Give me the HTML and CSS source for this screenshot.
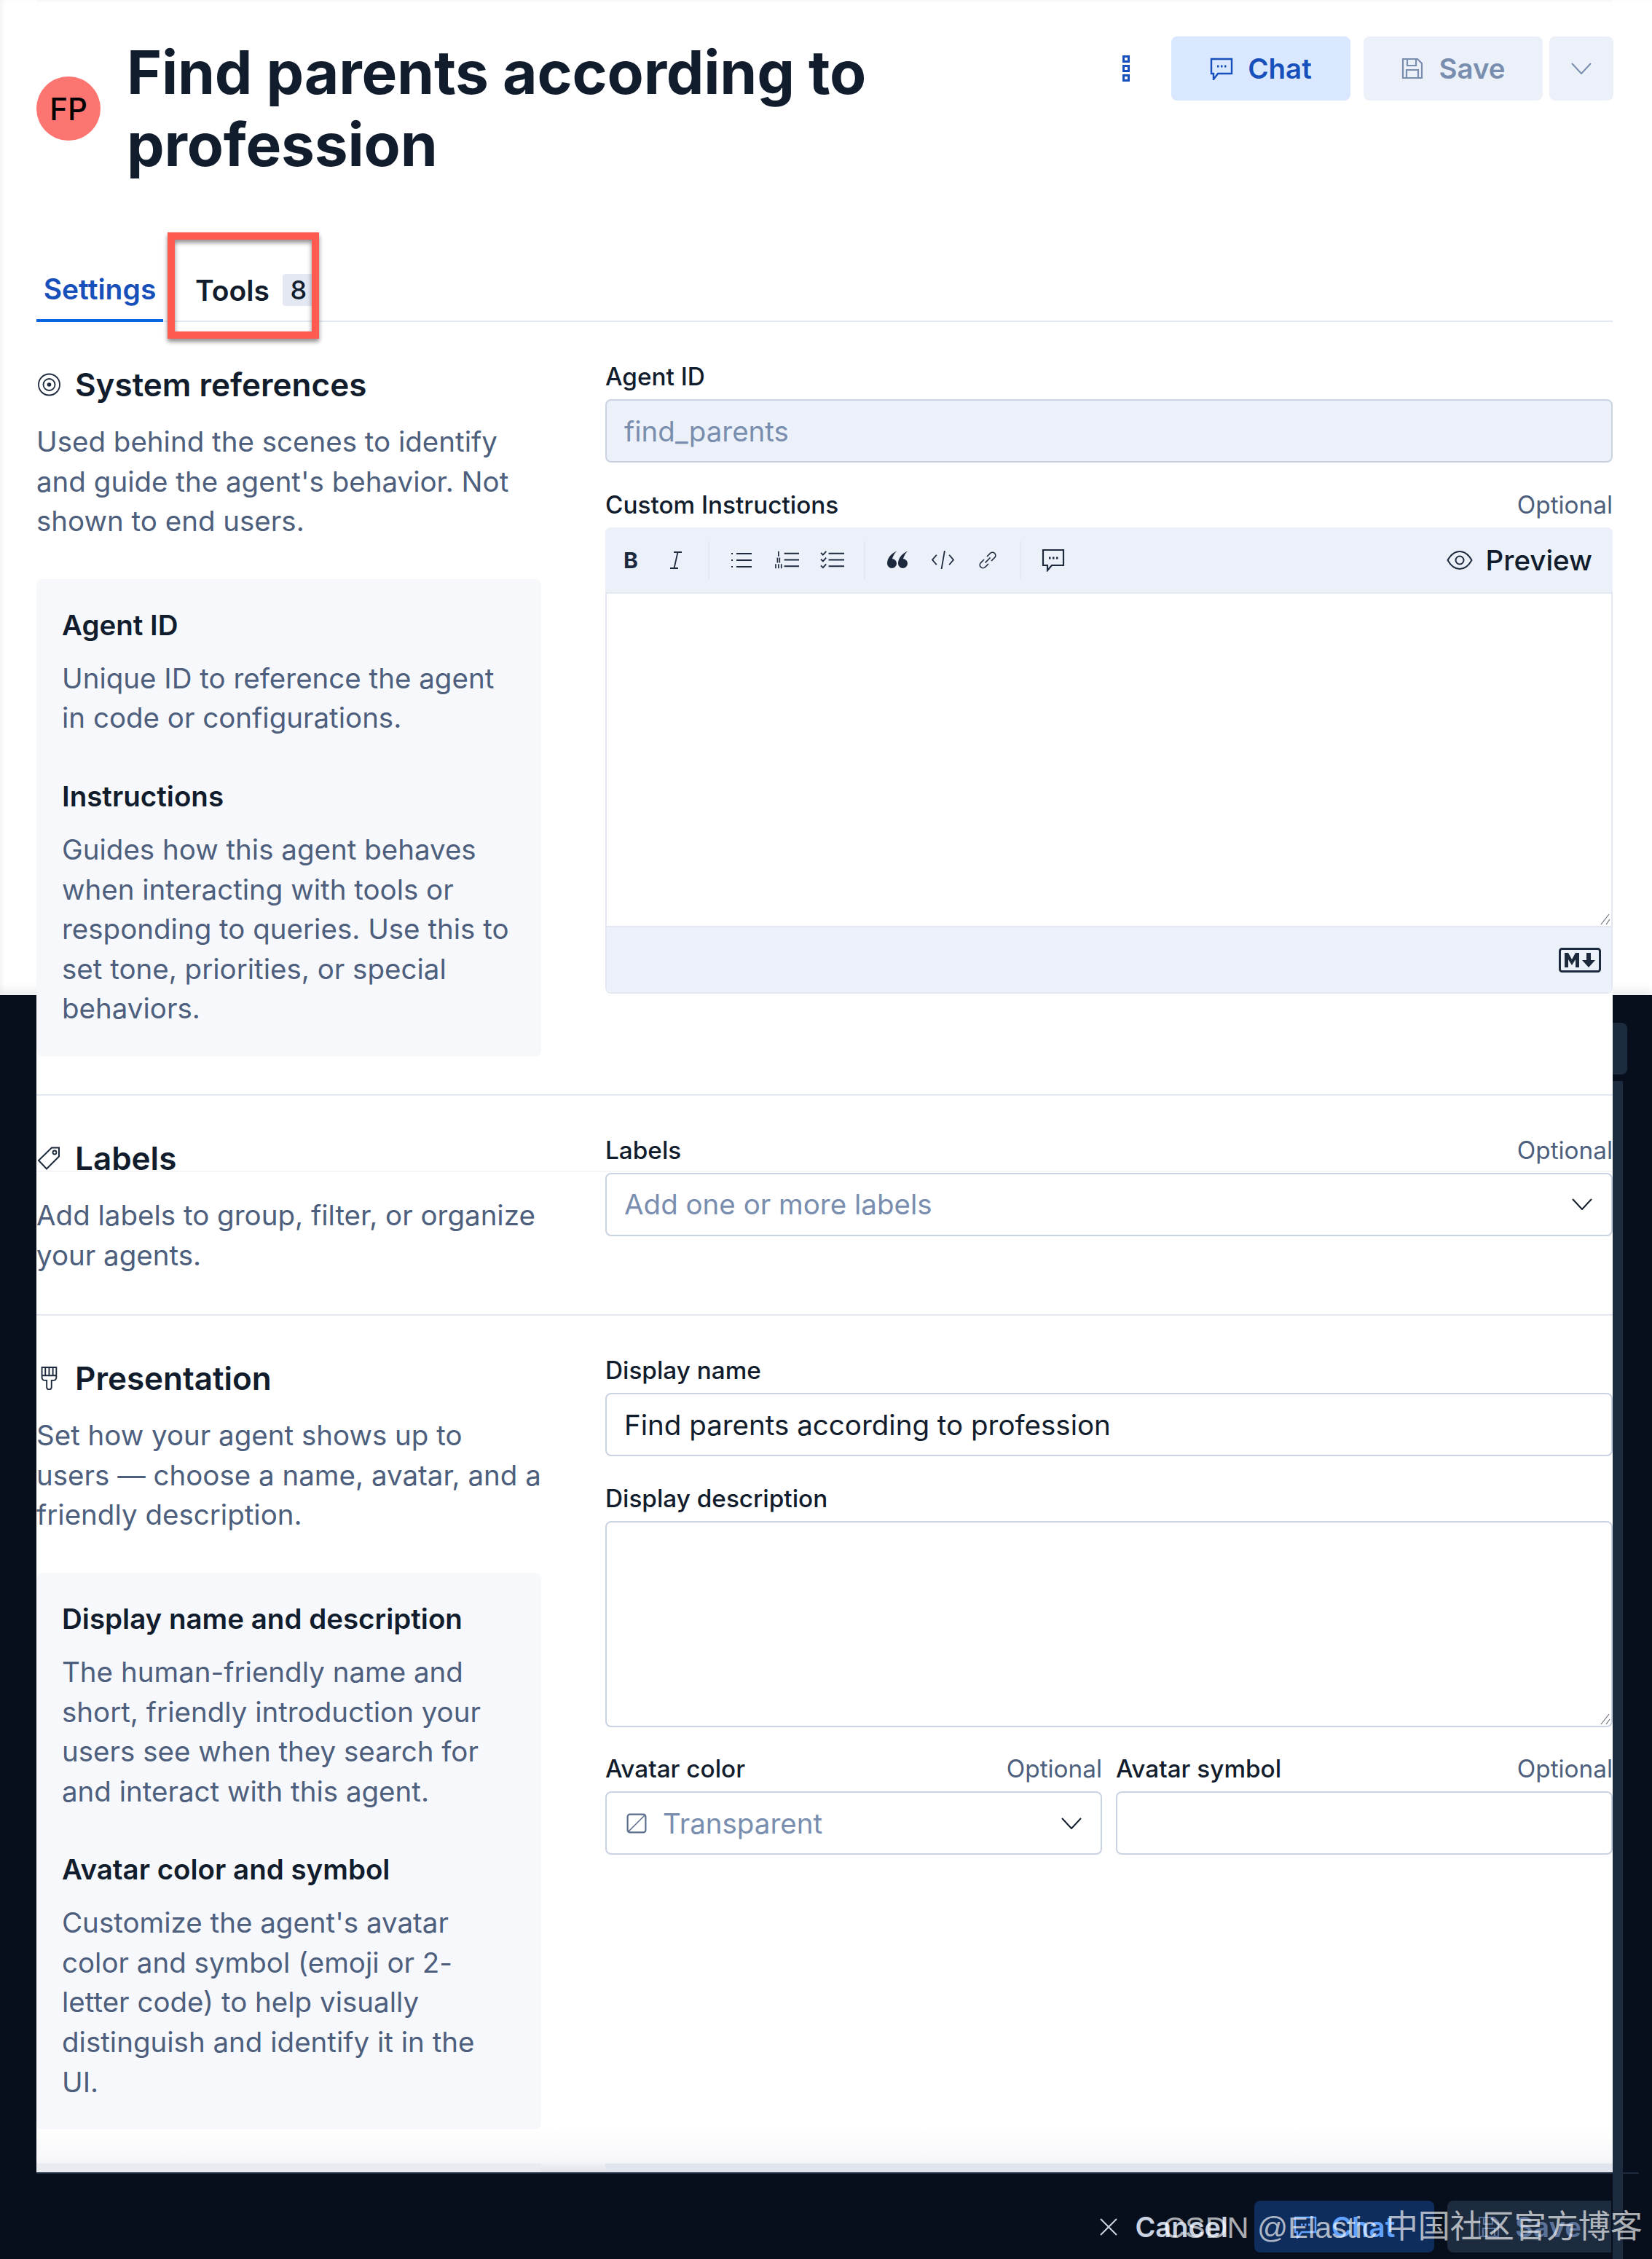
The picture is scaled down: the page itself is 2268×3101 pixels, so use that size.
FILE: index.html
```html
<!DOCTYPE html>
<html lang="en">
<head>
  <meta charset="UTF-8" />
  <title>Find parents according to profession</title>
  <link rel="stylesheet" href="styles.css">
</head>
<body>

<div class="page">
  <div class="backdrop"></div>
  <div class="side-block"></div>
  <div class="side-strip"></div>

  <div class="sheet">
    <header class="top">
      <div class="avatar">FP</div>
      <h1>Find parents according to<br>profession</h1>
      <div class="top-actions">
        <svg class="dots" viewBox="0 0 10 36"><path d="M1.5 1.5h7v7h-7zM1.5 14.5h7v7h-7zM1.5 27.5h7v7h-7z" fill="none" stroke="#1750ba" stroke-width="3"/></svg>
        <button class="btn btn-chat">
          <svg class="btn-icon" viewBox="0 0 32 32"><path d="M2 3h28v20H11l-6 8v-8H2z" fill="none" stroke="currentColor" stroke-width="2.4"/><path d="M10 13h2.5M15 13h2.5M20 13h2.5" stroke="currentColor" stroke-width="3"/></svg>
          Chat
        </button>
        <button class="btn btn-save">
          <svg class="btn-icon" viewBox="0 0 32 32"><path d="M3 3h20l6 6v20H3zM9 3v9h12V3M8 29V18h16v11" fill="none" stroke="currentColor" stroke-width="2.2"/></svg>
          Save
        </button>
        <button class="btn btn-more">
          <svg class="chevron" viewBox="0 0 28 16"><path d="M1 1l13 14L27 1" fill="none" stroke="currentColor" stroke-width="2"/></svg>
        </button>
      </div>
    </header>

    <nav class="tabs">
      <div class="tab tab-active">Settings</div>
      <div class="tab tab-tools">Tools <span class="count">8</span></div>
      <div class="callout"></div>
    </nav>

    <section class="row row-first">
      <div class="info">
        <h2>
          <svg class="head-icon" viewBox="0 0 33 32"><circle cx="17.500" cy="16" r="14.500" fill="none" stroke="#1d2a3e" stroke-width="1.800"/><circle cx="17.500" cy="16" r="8" fill="none" stroke="#1d2a3e" stroke-width="1.800"/><circle cx="17.500" cy="16" r="2.800" fill="#1d2a3e"/></svg>
          System references
        </h2>
        <p class="desc">Used behind the scenes to identify and guide the agent's behavior. Not shown to end users.</p>
        <div class="help help-first">
          <h3>Agent ID</h3>
          <p>Unique ID to reference the agent in code or configurations.</p>
          <h3>Instructions</h3>
          <p>Guides how this agent behaves when interacting with tools or responding to queries. Use this to set tone, priorities, or special behaviors.</p>
        </div>
      </div>
      <div class="fields">
        <div class="field-label"><span>Agent ID</span></div>
        <div class="input input-disabled">find_parents</div>
        <div class="field-label"><span>Custom Instructions</span><span class="optional">Optional</span></div>
        <div class="editor">
          <div class="toolbar">
            <div class="tool-group">
              <span class="tool tool-b">B</span>
              <span class="tool"><svg class="tool-i" viewBox="0 0 16 24"><path d="M5 1h11M0 23h11M10.500 1L5.500 23" fill="none" stroke="#1d2a3e" stroke-width="1.800"/></svg></span>
            </div>
            <div class="tool-group">
              <span class="tool"><svg class="tool-list" viewBox="0 0 28 24"><path d="M7 3h21M7 12h21M7 21h21" stroke="#1d2a3e" stroke-width="2"/><path d="M0 2h2v2H0zM0 11h2v2H0zM0 20h2v2H0z" fill="#1d2a3e"/></svg></span>
              <span class="tool"><svg class="tool-ol" viewBox="0 0 34 24"><path d="M13 3h21M13 12h21M13 21h21" stroke="#1d2a3e" stroke-width="2"/><path d="M5 0v7M3.500 9v7M6.500 9v7M1 18v6M5 18v6M9 18v6" stroke="#1d2a3e" stroke-width="1.700"/></svg></span>
              <span class="tool"><svg class="tool-ol" viewBox="0 0 34 24"><path d="M12 3h22M12 12h22M12 21h22" stroke="#1d2a3e" stroke-width="2"/><path d="M1 2l3 3 4.500-5M1 11l3 3 4.500-5M1 20l3 3 4.500-5" fill="none" stroke="#1d2a3e" stroke-width="1.800"/></svg></span>
            </div>
            <div class="tool-group">
              <span class="tool"><svg class="tool-quote" viewBox="0 0 29 24"><path d="M13 0C6 3 0 9 0 17a6.500 6.500 0 1 0 7-6.500C8 7 10 3 13 0zM28 0C21 3 15 9 15 17a6.500 6.500 0 1 0 7-6.500C23 7 25 3 28 0z" fill="#1d2a3e"/></svg></span>
              <span class="tool"><svg class="tool-ol" viewBox="0 0 32 26"><path d="M7 6l-6 7 6 7M25 6l6 7-6 7M18.500 0L14 26" fill="none" stroke="#1d2a3e" stroke-width="1.900"/></svg></span>
              <span class="tool"><svg class="tool-link" viewBox="0 0 24 24"><path d="M11 7l4.500-4.500a4 4 0 0 1 6 6L17 13M13 17l-4.500 4.500a4 4 0 0 1-6-6L7 11M8.500 15.500l7-7" fill="none" stroke="#1d2a3e" stroke-width="1.700"/></svg></span>
            </div>
            <div class="tool-group tool-last">
              <span class="tool"><svg class="tool-comment" viewBox="0 0 32 32"><path d="M2 2h28v21H14l-6 7v-7H2z" fill="none" stroke="#1d2a3e" stroke-width="2.200"/><path d="M10 13h2.500M15 13h2.500M20 13h2.500" stroke="#1d2a3e" stroke-width="3"/></svg></span>
            </div>
            <div class="preview">
              <svg class="eye" viewBox="0 0 36 28"><path d="M1.500 14C6 6 11 2 18 2s12 4 16.500 12C30 22 25 26 18 26S6 22 1.500 14z" fill="none" stroke="#1d2a3e" stroke-width="2"/><circle cx="18" cy="14" r="5.500" fill="none" stroke="#1d2a3e" stroke-width="2"/></svg>
              Preview
            </div>
          </div>
          <div class="editor-body">
            <svg class="grip" viewBox="0 0 14 16"><path d="M1 15L12 1M8 15l5-7" stroke="#69707d" stroke-width="1.200"/></svg>
          </div>
          <div class="editor-foot">
            <svg class="md" viewBox="0 0 58 34"><rect x="1.500" y="1.500" width="55" height="31" rx="3" fill="none" stroke="#1d2a3e" stroke-width="3"/><path d="M8 27V7h5l5 9 5-9h5v20h-5V16l-5 8-5-8v11z" fill="#1d2a3e"/><path d="M38 7h6v10h6l-9 10-9-10h6z" fill="#1d2a3e"/></svg>
          </div>
        </div>
      </div>
    </section>

    <hr class="rule rule-labels">

    <section class="row">
      <div class="info">
        <h2>
          <svg class="head-icon" viewBox="0 0 33 32"><path d="M21 1.500h10v12L14 30.500 3 19z" fill="none" stroke="#1d2a3e" stroke-width="2"/><circle cx="25" cy="8" r="2.500" fill="none" stroke="#1d2a3e" stroke-width="1.800"/></svg>
          Labels
        </h2>
        <p class="desc">Add labels to group, filter, or organize your agents.</p>
      </div>
      <div class="fields">
        <div class="field-label"><span>Labels</span><span class="optional">Optional</span></div>
        <div class="input input-select placeholder">
          Add one or more labels
          <svg class="chevron chevron-dark" viewBox="0 0 28 16"><path d="M1 1l13 14L27 1" fill="none" stroke="currentColor" stroke-width="2"/></svg>
        </div>
      </div>
    </section>

    <hr class="rule rule-presentation">

    <section class="row">
      <div class="info">
        <h2>
          <svg class="head-icon" viewBox="0 0 33 34"><path d="M7 1h21v15a4 4 0 0 1-4 4h-3v10a3 3 0 0 1-7 0V20h-3a4 4 0 0 1-4-4zM7 13h21M12 1v12M17.500 1v12M23 1v12" fill="none" stroke="#1d2a3e" stroke-width="2"/></svg>
          Presentation
        </h2>
        <p class="desc">Set how your agent shows up to users — choose a name, avatar, and a friendly description.</p>
        <div class="help">
          <h3>Display name and description</h3>
          <p>The human-friendly name and short, friendly introduction your users see when they search for and interact with this agent.</p>
          <h3>Avatar color and symbol</h3>
          <p>Customize the agent's avatar color and symbol (emoji or 2-letter code) to help visually distinguish and identify it in the UI.</p>
        </div>
      </div>
      <div class="fields">
        <div class="field-label"><span>Display name</span></div>
        <div class="input">Find parents according to profession</div>
        <div class="field-label"><span>Display description</span></div>
        <div class="textarea">
          <svg class="grip" viewBox="0 0 14 16"><path d="M1 15L12 1M8 15l5-7" stroke="#69707d" stroke-width="1.200"/></svg>
        </div>
        <div class="avatar-fields">
          <div>
            <div class="field-label"><span>Avatar color</span><span class="optional">Optional</span></div>
            <div class="input input-select placeholder">
              <span class="swatch-wrap">
                <svg class="swatch" viewBox="0 0 26 26"><rect x="1.500" y="1.500" width="23" height="23" rx="3" fill="none" stroke="#5a6d8c" stroke-width="2"/><path d="M3 23L23 3" stroke="#5a6d8c" stroke-width="1.500"/></svg>
                Transparent
              </span>
              <svg class="chevron chevron-dark" viewBox="0 0 28 16"><path d="M1 1l13 14L27 1" fill="none" stroke="currentColor" stroke-width="2"/></svg>
            </div>
          </div>
          <div>
            <div class="field-label"><span>Avatar symbol</span><span class="optional">Optional</span></div>
            <div class="input"></div>
          </div>
        </div>
      </div>
    </section>

    <div class="peek">
      <div class="peek-left"></div>
      <div class="peek-right"></div>
    </div>
  </div>

  <footer class="bottom">
    <div class="cancel">
      <svg class="cancel-x" viewBox="0 0 24 24"><path d="M1 1l22 22M23 1L1 23" stroke="currentColor" stroke-width="2"/></svg>
      Cancel
    </div>
    <button class="btn btn-dark-chat">
      <svg class="btn-icon" viewBox="0 0 32 32"><path d="M2 3h28v20H11l-6 8v-8H2z" fill="none" stroke="currentColor" stroke-width="2.400"/><path d="M10 13h2.500M15 13h2.500M20 13h2.500" stroke="currentColor" stroke-width="3"/></svg>
      Chat
    </button>
    <button class="btn btn-dark-save">
      <svg class="btn-icon" viewBox="0 0 32 32"><path d="M3 3h20l6 6v20H3zM9 3v9h12V3M8 29V18h16v11" fill="none" stroke="currentColor" stroke-width="2.200"/></svg>
      Save
    </button>
  </footer>

  <div class="seam"></div>
  <div class="watermark"><span class="watermark-latin">CSDN @Elastic</span> 中国社区官方博客</div>
</div>

</body>
</html>
```

FILE: styles.css
```css
* {
  margin: 0;
  padding: 0;
  box-sizing: border-box;
}
body {
  font-family: Inter, 'Liberation Sans', sans-serif;
  background: #fff;
  color: #111c2c;
}
button {
  font-family: inherit;
  border: none;
}

.page {
  position: relative;
  width: 2268px;
  height: 3101px;
  overflow: hidden;
  box-shadow: inset 5px 0 6px -2px rgba(0,0,0,0.05);
}
.backdrop {
  position: absolute;
  top: 1366px;
  left: 0;
  right: 0;
  bottom: 0;
  background: #070e1c;
  box-shadow: 0 -8px 10px rgba(30,40,60,0.08);
}
.side-block {
  position: absolute;
  top: 1404px;
  left: 2214px;
  width: 20px;
  height: 71px;
  background: #1d2b3e;
  border-radius: 0 8px 8px 0;
}
.side-strip {
  position: absolute;
  top: 1484px;
  left: 2214px;
  width: 14px;
  bottom: 0;
  background: #1d2b3e;
  z-index: 2;
}
.seam {
  position: absolute;
  top: 1607px;
  left: 50px;
  width: 2164px;
  height: 2px;
  background: #f5f5f7;
}

.sheet {
  position: relative;
  margin: 0 54px 0 50px;
  height: 2982px;
  background: #fff;
  box-shadow: inset 0 4px 3px -2px rgba(0,0,0,0.04);
}

/* header */
.top {
  display: flex;
  align-items: center;
  padding-top: 50px;
  position: relative;
}
.avatar {
  width: 88px;
  height: 88px;
  border-radius: 50%;
  background: #fc7570;
  color: #000;
  font-size: 42px;
  font-weight: 500;
  display: flex;
  align-items: center;
  justify-content: center;
  flex-shrink: 0;
}
h1 {
  margin-left: 36px;
  font-size: 82px;
  line-height: 99px;
  font-weight: 700;
  color: #111c2c;
  letter-spacing: -0.2px;
}
.top-actions {
  margin-left: auto;
  align-self: flex-start;
  display: flex;
  align-items: center;
}
.dots {
  width: 10px;
  height: 36px;
  margin-right: 57px;
}
.btn {
  height: 88px;
  border-radius: 8px;
  font-size: 38.5px;
  font-weight: 600;
  display: flex;
  align-items: center;
  justify-content: center;
  gap: 20px;
}
.btn-icon {
  width: 32px;
  height: 32px;
}
.btn-chat {
  width: 246px;
  background: #d9e8ff;
  color: #1750ba;
}
.btn-save {
  width: 246px;
  margin-left: 18px;
  background: #ecf1f9;
  color: #798eae;
}
.btn-more {
  width: 88px;
  margin-left: 9px;
  margin-right: -1px;
  background: #ecf1f9;
  color: #798eae;
}
.chevron {
  width: 28px;
  height: 16px;
}
.chevron-dark {
  color: #111c2c;
}

/* tabs */
.tabs {
  position: relative;
  display: flex;
  height: 88px;
  margin-top: 106px;
  border-bottom: 2px solid #e3e8f2;
}
.tab {
  display: flex;
  align-items: center;
  font-size: 39px;
  font-weight: 600;
  height: 88px;
}
.tab-active {
  width: 174px;
  justify-content: center;
  color: #1750ba;
  border-bottom: 4px solid #0b64dd;
}
.tab-tools {
  margin-left: 44px;
  gap: 18px;
}
.count {
  width: 44px;
  height: 44px;
  background: #e3e8f2;
  border-radius: 4px;
  font-size: 36px;
  font-weight: 500;
  display: flex;
  align-items: center;
  justify-content: center;
}
.callout {
  position: absolute;
  left: 180px;
  top: -35px;
  width: 208px;
  height: 146px;
  border: 10px solid #fe5a4f;
  box-shadow: 0 4px 6px rgba(0,0,0,0.45), inset 0 4px 6px rgba(0,0,0,0.45);
}

/* sections */
.row {
  display: grid;
  grid-template-columns: 693px 1383px;
  column-gap: 88px;
  padding-top: 53px;
}
.info h2 {
  display: flex;
  align-items: center;
  gap: 20px;
  margin-top: 6px;
  font-size: 44px;
  line-height: 54px;
  font-weight: 600;
}
.head-icon {
  width: 33px;
  height: 32px;
}
.desc {
  margin-top: 24px;
  font-size: 38.5px;
  line-height: 54.6px;
  color: #4d5f7d;
}
.help {
  margin-top: 52px;
  padding: 36px 35px 38px;
  background: #f7f8fc;
  border-radius: 8px;
  font-size: 38.5px;
  line-height: 54.6px;
}
.help h3 {
  font-size: 38.5px;
  line-height: 54px;
  font-weight: 600;
  margin-bottom: 19px;
}
.help p {
  color: #4d5f7d;
  margin-bottom: 53px;
}
.help p:last-child {
  margin-bottom: 0;
}
.rule {
  border: none;
  height: 2px;
  background: #e3e8f2;
}
.rule-labels {
  margin-top: 52px;
}
.rule-presentation {
  margin-top: 54px;
}

/* form fields */
.field-label {
  display: flex;
  justify-content: space-between;
  font-size: 33.3px;
  line-height: 44px;
  font-weight: 500;
  margin-bottom: 9px;
}
.optional {
  font-weight: 400;
  color: #4d5f7d;
}
.input {
  height: 87px;
  padding: 0 24px;
  border: 2px solid #cad3e2;
  border-radius: 8px;
  display: flex;
  align-items: center;
  font-size: 38.5px;
  margin-bottom: 36px;
  background: #fff;
}
.input-disabled {
  background: #ecf1f9;
  color: #798eae;
}
.placeholder {
  color: #798eae;
}
.input-select {
  justify-content: space-between;
  padding-right: 26px;
}
.swatch-wrap {
  display: flex;
  align-items: center;
  gap: 22px;
}
.swatch {
  width: 28px;
  height: 28px;
  margin-left: 3px;
}
.textarea {
  position: relative;
  height: 283px;
  border: 2px solid #cad3e2;
  border-radius: 8px;
  margin-bottom: 35px;
}
.avatar-fields {
  display: grid;
  grid-template-columns: 682px 682px;
  column-gap: 19px;
}
.grip {
  position: absolute;
  right: 1px;
  bottom: 1px;
  width: 14px;
  height: 16px;
}

/* markdown editor */
.editor {
  border-radius: 8px;
  border: 2px solid #e3e8f2;
  border-top: none;
}
.toolbar {
  height: 91px;
  background: #ecf1f9;
  border-radius: 8px 8px 0 0;
  border-bottom: 2px solid #e3e8f2;
  display: flex;
  align-items: center;
  margin-left: -2px;
  margin-right: -2px;
}
.tool-group {
  display: flex;
  height: 52px;
  padding: 0 13px 0 2px;
  margin-right: 11px;
  border-right: 2px solid #e3e8f2;
}
.tool-group:first-child {
  padding-left: 4px;
}
.tool-last {
  border-right: none;
}
.tool {
  width: 62px;
  height: 52px;
  display: flex;
  align-items: center;
  justify-content: center;
}
.tool-i {
  width: 16px;
  height: 24px;
}
.tool-list {
  width: 28px;
  height: 24px;
}
.tool-ol {
  width: 33px;
  height: 25px;
}
.tool-quote {
  width: 29px;
  height: 25px;
}
.tool-link {
  width: 24px;
  height: 24px;
}
.tool-comment {
  width: 32px;
  height: 32px;
}
.tool-b {
  font-size: 30px;
  font-weight: 700;
  color: #1d2a3e;
}
.preview {
  margin-left: auto;
  margin-right: 28px;
  display: flex;
  align-items: center;
  gap: 18px;
  font-size: 38.5px;
  font-weight: 500;
}
.eye {
  width: 36px;
  height: 28px;
}
.editor-body {
  position: relative;
  height: 456px;
}
.editor-foot {
  height: 91px;
  background: #ecf1f9;
  border-top: 2px solid #e3e8f2;
  border-radius: 0 0 8px 8px;
  display: flex;
  align-items: center;
  justify-content: flex-end;
  padding-right: 14px;
}
.md {
  width: 58px;
  height: 34px;
}

/* what shows under the footer */
.peek {
  position: absolute;
  left: 0;
  right: 0;
  bottom: 0;
  height: 62px;
  display: flex;
  align-items: flex-end;
  justify-content: space-between;
  background: linear-gradient(to bottom, rgba(255,255,255,0) 0%, rgba(240,241,245,0.6) 75%, #dfe2e9 100%);
}
.peek-left {
  width: 693px;
  height: 12px;
  background: #e9ebf0;
}
.peek-right {
  width: 1383px;
  height: 11px;
  margin-bottom: 1px;
  background: #dfe4ed;
  border-radius: 0 0 8px 8px;
}

/* footer */
.bottom {
  position: relative;
  height: 119px;
  padding: 37px 38px 9px 0;
  border-top: 2px solid #1d2b3e;
  margin-left: 50px;
  margin-right: 18px;
  display: flex;
  align-items: flex-start;
  justify-content: flex-end;
}
.cancel {
  display: flex;
  align-items: center;
  gap: 24px;
  height: 71px;
  margin-right: 36px;
  font-size: 38px;
  font-weight: 600;
  color: #cad3e2;
}
.cancel-x {
  width: 24px;
  height: 24px;
}
.btn-dark-chat {
  width: 247px;
  height: 71px;
  background: #0f2d5c;
  color: #61a2ff;
}
.btn-dark-save {
  width: 225px;
  height: 71px;
  margin-left: 18px;
  background: #1d2b3e;
  color: #5a7299;
  border-radius: 8px 0 0 8px;
}
.watermark {
  position: absolute;
  left: 1597px;
  top: 3026px;
  z-index: 3;
  font-family: 'Liberation Sans', 'Noto Sans CJK SC', sans-serif;
  font-size: 44px;
  line-height: 62px;
  color: rgba(255,255,255,0.68);
  white-space: nowrap;
}
.watermark-latin {
  font-size: 41.5px;
}
```
